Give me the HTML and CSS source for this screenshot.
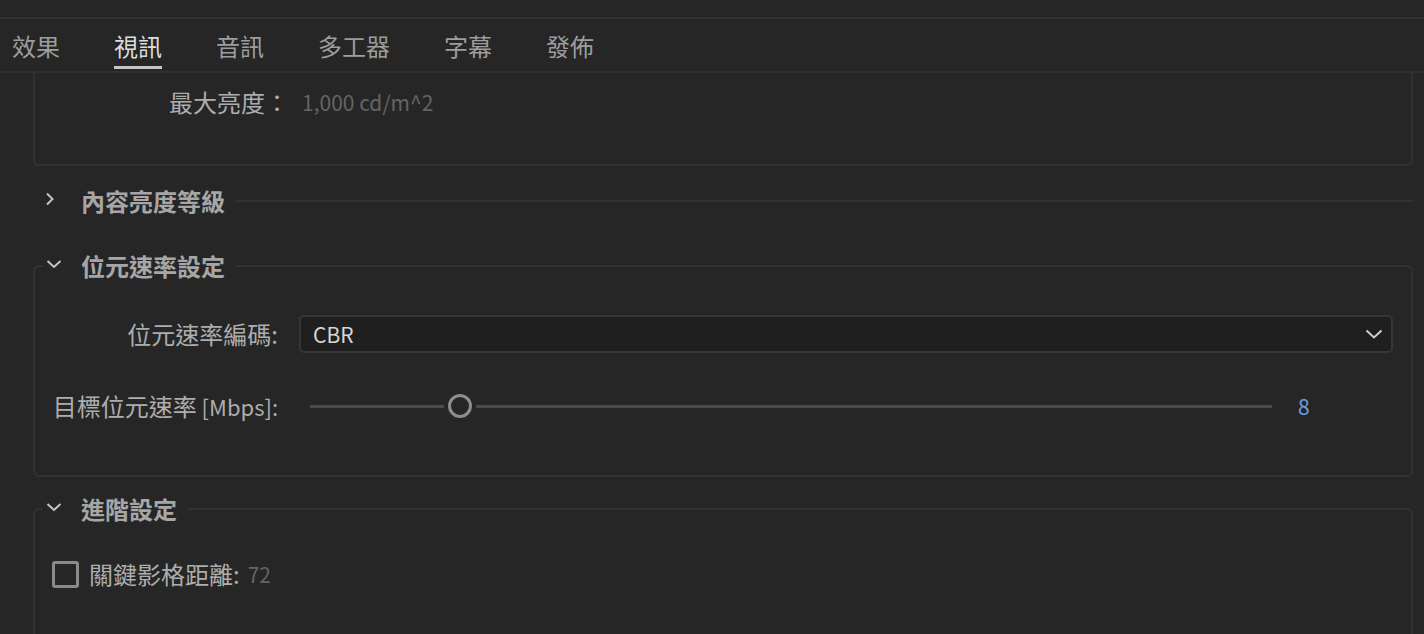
FILE: index.html
```html
<!DOCTYPE html>
<html lang="zh-Hant">
<head>
<meta charset="utf-8">
<link rel="stylesheet" href="styles.css">
</head>
<body>
<div class="topstrip"></div>
<nav class="tabbar">
  <div class="tab">效果</div>
  <div class="tab active">視訊</div>
  <div class="tab">音訊</div>
  <div class="tab">多工器</div>
  <div class="tab">字幕</div>
  <div class="tab">發佈</div>
</nav>
<main class="content">
  <div class="box box-top">
    <div class="row row-max">
      <span class="lbl">最大亮度：</span>
      <span class="val">1,000 cd/m^2</span>
    </div>
  </div>

  <div class="collapsed">
    <svg class="chev-right" width="10" height="14" viewBox="0 0 10 14"><path d="M2 1.5 L7.5 7 L2 12.5" fill="none" stroke="#c4c4c4" stroke-width="2"/></svg>
    <span class="sec-title">內容亮度等級</span>
    <span class="sec-line"></span>
  </div>

  <fieldset class="group group-rate">
    <legend class="legend">
      <svg class="chev-down" width="16" height="10" viewBox="0 0 16 10"><path d="M1.5 2 L8 8 L14.5 2" fill="none" stroke="#c4c4c4" stroke-width="2"/></svg>
      <span class="sec-title">位元速率設定</span>
    </legend>
    <div class="row row-select">
      <span class="lbl">位元速率編碼:</span>
      <div class="select">
        <span class="select-text">CBR</span>
        <svg width="18" height="10" viewBox="0 0 18 10"><path d="M1.5 1.5 L9 8.5 L16.5 1.5" fill="none" stroke="#cfcfcf" stroke-width="2"/></svg>
      </div>
    </div>
    <div class="row row-slider">
      <span class="lbl">目標位元速率<span class="lbl-latin"> [Mbps]:</span></span>
      <div class="slider">
        <div class="track"></div>
        <div class="thumb" style="left: 150px"></div>
      </div>
      <span class="slider-val">8</span>
    </div>
  </fieldset>

  <fieldset class="group group-adv">
    <legend class="legend">
      <svg class="chev-down" width="16" height="10" viewBox="0 0 16 10"><path d="M1.5 2 L8 8 L14.5 2" fill="none" stroke="#c4c4c4" stroke-width="2"/></svg>
      <span class="sec-title">進階設定</span>
    </legend>
    <div class="row row-check">
      <span class="checkbox"></span>
      <span class="check-lbl">關鍵影格距離:</span>
      <span class="val val-72">72</span>
    </div>
  </fieldset>
</main>
</body>
</html>
```

FILE: styles.css
```css
* { box-sizing: border-box; }
html, body {
  margin: 0;
  padding: 0;
  background: #262626;
  height: 634px;
  overflow: hidden;
}
body {
  font-family: "Noto Sans CJK TC", "Noto Sans", sans-serif;
  color: #ababab;
}
.topstrip {
  height: 19px;
  border-bottom: 2px solid #323232;
}
.tabbar {
  display: flex;
  gap: 54px;
  height: 54px;
  padding-left: 12px;
  border-bottom: 2px solid #303030;
}
.tab {
  font-size: 24px;
  line-height: 34px;
  padding-top: 10px;
  padding-bottom: 3px;
  height: 50px;
  color: #9d9d9d;
  border-bottom: 3px solid transparent;
}
.tab.active {
  color: #dcdcdc;
  border-bottom-color: #c6c6c6;
}
.content {
  height: 561px;
  overflow: hidden;
}
.box {
  margin: 0 11px 0 33px;
  border: 2px solid #323232;
  border-radius: 5px;
}
.box-top {
  border-top: none;
  border-top-left-radius: 0;
  border-top-right-radius: 0;
  padding: 12px 0 45px 0;
}
.row {
  display: flex;
  align-items: center;
}
.lbl {
  width: 243px;
  text-align: right;
  font-size: 24px;
  line-height: 34px;
  color: #adadad;
  white-space: nowrap;
  flex-shrink: 0;
}
.lbl-latin { font-size: 22px; }
.row-max { height: 34px; }
.row-max .lbl { width: 254px; }
.val {
  font-size: 21px;
  color: #646464;
  margin-left: 13px;
  line-height: 34px;
}
.collapsed {
  display: flex;
  align-items: center;
  height: 34px;
  margin: 18px 11px 0 45px;
}
.chev-right { margin-right: 26px; margin-top: -4px; }
.sec-title {
  font-size: 24px;
  font-weight: 700;
  line-height: 34px;
  color: #a6a6a6;
}
.sec-line {
  flex: 1;
  height: 2px;
  background: #323232;
  margin-left: 11px;
}
.group {
  margin: 31px 11px 0 33px;
  padding: 0 18px 0 0;
  border: 2px solid #323232;
  border-radius: 6px;
  min-width: 0;
}
.legend {
  display: flex;
  align-items: center;
  height: 34px;
  margin-left: 8px;
  padding: 0 11px 0 3px;
}
.chev-down { margin-right: 19px; margin-top: -5px; }
.group-rate { padding-top: 32px; padding-bottom: 50px; }
.row-select { height: 38px; }
.select {
  flex: 1;
  margin-left: 21px;
  height: 38px;
  background: #1f1f1f;
  border: 2px solid #363636;
  border-radius: 5px;
  display: flex;
  align-items: center;
  justify-content: space-between;
  padding: 0 8px 0 12px;
}
.select-text {
  font-size: 21px;
  color: #d6d6d6;
}
.row-slider { height: 38px; margin-top: 34px; }
.slider {
  position: relative;
  width: 962px;
  height: 24px;
  margin-left: 32px;
  display: flex;
  align-items: center;
}
.track {
  width: 100%;
  height: 3px;
  background: #4b4b4b;
}
.thumb {
  position: absolute;
  top: 0;
  width: 24px;
  height: 24px;
  margin-left: -12px;
  border-radius: 50%;
  border: 3px solid #8d8d8d;
  background: #262626;
  box-shadow: 0 0 0 4px #262626;
}
.slider-val {
  margin-left: 26px;
  font-size: 21px;
  color: #6b9fe0;
}
.group-adv { margin-top: 15px; padding-top: 31px; padding-bottom: 60px; }
.row-check { height: 34px; padding-left: 17px; }
.checkbox {
  width: 27px;
  height: 27px;
  border: 3px solid #8a8a8a;
  border-radius: 3px;
  flex-shrink: 0;
}
.check-lbl {
  margin-left: 10px;
  font-size: 24px;
  color: #adadad;
  line-height: 34px;
}
.val-72 { margin-left: 8px; }
```
